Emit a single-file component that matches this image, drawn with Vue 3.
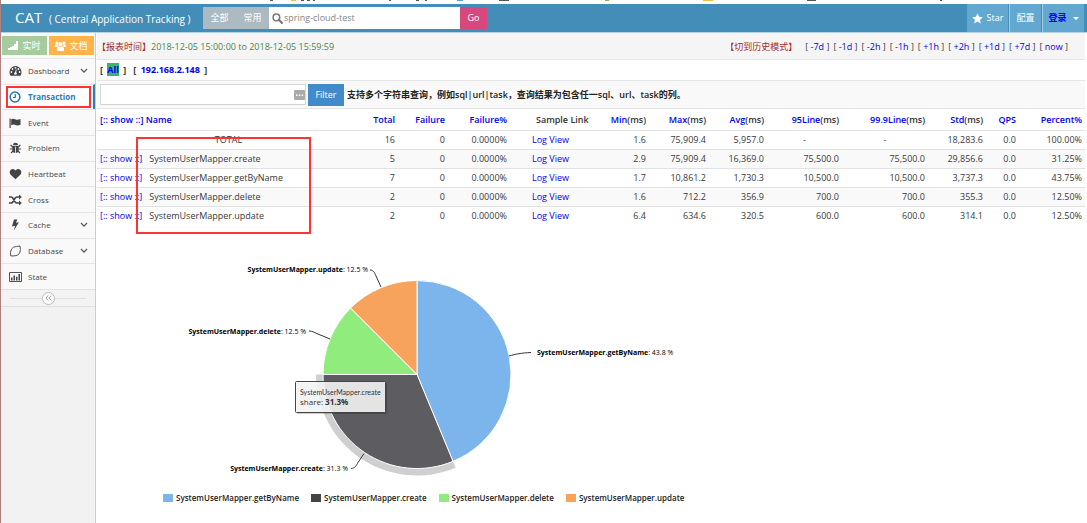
<script setup>
import { ref } from 'vue'

const domain = ref('spring-cloud-test')
const filter = ref('')

const menu = [
  { name: 'Dashboard', icon: 'dashboard', sub: true },
  { name: 'Transaction', icon: 'clock', active: true },
  { name: 'Event', icon: 'flag' },
  { name: 'Problem', icon: 'bug' },
  { name: 'Heartbeat', icon: 'heart' },
  { name: 'Cross', icon: 'random' },
  { name: 'Cache', icon: 'bolt', sub: true },
  { name: 'Database', icon: 'leaf', sub: true },
  { name: 'State', icon: 'chart' }
]

const steps = ['-7d', '-1d', '-2h', '-1h', '+1h', '+2h', '+1d', '+7d', 'now']

const timing = ['Min', 'Max', 'Avg', '95Line', '99.9Line', 'Std']

const rows = [
  { name: 'TOTAL', total: 16, values: ['1.6', '75,909.4', '5,957.0', '-', '-', '18,283.6'], percent: '100.00%' },
  { name: 'SystemUserMapper.create', total: 5, values: ['2.9', '75,909.4', '16,369.0', '75,500.0', '75,500.0', '29,856.6'], percent: '31.25%' },
  { name: 'SystemUserMapper.getByName', total: 7, values: ['1.7', '10,861.2', '1,730.3', '10,500.0', '10,500.0', '3,737.3'], percent: '43.75%' },
  { name: 'SystemUserMapper.delete', total: 2, values: ['1.6', '712.2', '356.9', '700.0', '700.0', '355.3'], percent: '12.50%' },
  { name: 'SystemUserMapper.update', total: 2, values: ['6.4', '634.6', '320.5', '600.0', '600.0', '314.1'], percent: '12.50%' }
]

const legend = [
  { name: 'SystemUserMapper.getByName', color: 'blue' },
  { name: 'SystemUserMapper.create', color: 'dark' },
  { name: 'SystemUserMapper.delete', color: 'green' },
  { name: 'SystemUserMapper.update', color: 'orange' }
]
</script>

<template>
  <div class="page">
    <svg class="strip" width="1087" height="4" aria-hidden="true">
      <path d="M270 0h3v1h-3zM301 0h3v1h-3zM307 0h3v1h-3zM313 0h2v1h-2zM389 0h2v1h-2zM416 0h3v1h-3zM425 0h2v1h-2zM499 0h10v1h-10zM807 0h9v1h-9zM940 0h2v1h-2z" fill="#555" />
      <path d="M291 0h5v1h-5zM703 0h10v1h-10z" fill="#f0c04a" />
      <path d="M457 0h6v1h-6z" fill="#5aa0e8" />
      <path d="M605 0h4v1h-4z" fill="#a0a860" />
    </svg>
    <header class="navbar">
      <a class="brand" href="#">CAT</a>
      <a class="tagline" href="#">( Central Application Tracking )</a>
      <form class="search" @submit.prevent>
        <button type="button" class="cat">全部</button>
        <button type="button" class="cat">常用</button>
        <label class="domain">
          <svg width="11" height="11" viewBox="0 0 11 11" aria-hidden="true"><circle cx="4.4" cy="4.4" r="3.3" fill="none" stroke="#777" stroke-width="1.5" /><path d="M6.8 6.8 10 10" stroke="#777" stroke-width="2" stroke-linecap="round" /></svg>
          <input v-model="domain" type="text" aria-label="Domain" />
        </label>
        <button type="submit" class="go">Go</button>
      </form>
      <nav class="actions">
        <a href="#" class="white"><svg width="11" height="11" viewBox="0 0 12 12" aria-hidden="true"><path d="M6 .3 7.7 4l4.1.5-3 2.8.8 4.1L6 9.4 2.4 11.4l.8-4.1-3-2.8L4.300 4z" fill="#fff" /></svg>Star</a>
        <a href="#" class="white">配置</a>
        <a href="#" class="login">登录<i class="caret"></i></a>
      </nav>
    </header>

    <div class="body">
      <aside class="sidebar">
        <div class="shortcuts">
          <button type="button" class="live"><svg width="11" height="9" viewBox="0 0 11 9" aria-hidden="true"><path d="M0 7h2v2H0zM2 6h2v3H2zM4 5h2v4H4zM6 3h2v6H6zM8 0h2v9H8z" fill="#fff" /></svg>实时</button>
          <button type="button" class="docs"><svg width="11" height="10" viewBox="0 0 11 10" aria-hidden="true"><g fill="#fff"><circle cx="2" cy="2" r="1.500" /><circle cx="9" cy="2" r="1.500" /><circle cx="5.500" cy="3.400" r="2.100" /><path d="M0 6V4.500q0-1 1-1h1.500q.3 1.600 1 2H2.300L2 6zM11 6V4.500q0-1-1-1H8.500q-.3 1.600-1 2h1.200L9 6zM2 10V7.500q0-2 1.800-2 1.700 1.200 3.400 0 1.800 0 1.800 2V10z" /></g></svg>文档</button>
        </div>
        <ul class="menu">
          <li v-for="m in menu" :key="m.name" :class="{ active: m.active }">
            <a href="#">
              <svg class="icon" width="13" height="12" viewBox="0 0 13 12" aria-hidden="true">
                <g v-if="m.icon === 'dashboard'"><path d="M6.500 1A6 6 0 0 0 .5 7q0 2 1 3.800h10q1-1.800 1-3.800a6 6 0 0 0-6-6z" fill="#444" /><g fill="#f9f9f9"><circle cx="2.400" cy="7" r=".9" /><circle cx="3.600" cy="4" r=".9" /><circle cx="6.500" cy="2.800" r=".9" /><circle cx="9.400" cy="4" r=".9" /><circle cx="10.600" cy="7" r=".9" /></g><path d="m7.300 4.500-.8 3.500" stroke="#f9f9f9" stroke-width="1" /><circle cx="6.500" cy="8.500" r="1.300" fill="#f9f9f9" /></g>
                <g v-else-if="m.icon === 'clock'" fill="none" stroke="#1f77b8"><circle cx="6" cy="6" r="4.900" stroke-width="1.500" /><path d="M6.300 3v3.500H4" stroke-width="1.200" /></g>
                <g v-else-if="m.icon === 'flag'" fill="#444"><path d="M.5 1.500h1.200V11H.5zM2.200 2.300q2-1.200 4 0t5.300-.3v5.700q-2.800 1.300-5 .3t-4.300.2z" /></g>
                <g v-else-if="m.icon === 'bug'"><path d="M4 3a2.500 2.200 0 0 1 5 0zM3.300 3.700h6.400v4a3.200 3.200 0 0 1-6.400 0z" fill="#444" /><path d="M3.500 5 1.600 3M9.500 5l1.900-2M3.500 7H.8M9.500 7h2.700M4 9l-2 2M9 9l2 2" stroke="#444" stroke-width="1.100" fill="none" /><path d="M6.500 4.600V11" stroke="#f9f9f9" stroke-width=".8" /></g>
                <path v-else-if="m.icon === 'heart'" d="M6.500 11.300 1.400 6.400Q.2 4.700.9 2.900 2 .8 4 1q1.500.1 2.500 1.600Q7.500 1.100 9 1q2-.2 3.100 1.900.7 1.800-.5 3.500z" fill="#444" />
                <g v-else-if="m.icon === 'random'" fill="none" stroke="#444" stroke-width="1.600"><path d="M0 3h2.300q1 0 1.800 1.500L6 7.700Q6.900 9 8 9h2.500M0 9h2.300q1 0 1.800-1.500L6 4.300Q6.900 3 8 3h2.500" /><path d="M10 .6 12.800 3 10 5.400zM10 6.600 12.800 9 10 11.400z" fill="#444" stroke="none" /></g>
                <path v-else-if="m.icon === 'bolt'" d="M5 .5h3.400L6.900 3.700l3-.5L4.800 11.800l1.300-5-3.200.6z" fill="#444" />
                <path v-else-if="m.icon === 'leaf'" d="M11 1q1 4-.3 7-1.400 2.700-4.700 2.800L1.800 11Q.7 7 2.500 4 4 1.600 7.500 1.500z" fill="none" stroke="#555" stroke-width="1" />
                <g v-else><path d="M.5 1.500h12v9H.5z" fill="none" stroke="#555" /><path d="M2 6.500h1.500v3H2zM4.500 4.500H6v5H4.500zM7 5.800h1.500v3.700H7zM9.500 3H11v6.500H9.500z" fill="#444" /></g>
              </svg>
              <span>{{ m.name }}</span>
              <svg v-if="m.sub" class="arrow" width="8" height="6" viewBox="0 0 8 6" aria-hidden="true"><path d="m1 1 3 3.200L7 1" fill="none" stroke="#555" stroke-width="1.200" /></svg>
            </a>
          </li>
        </ul>
        <div class="collapse">
          <button type="button" aria-label="Collapse menu"><svg width="7" height="6" viewBox="0 0 7 6" aria-hidden="true"><path d="M3.200.5.9 3l2.300 2.500M6.200.5 3.900 3l2.300 2.500" fill="none" stroke="#999" /></svg></button>
        </div>
      </aside>

      <main class="content">
        <div class="crumbs">
          <div><span class="red">【报表时间】</span><span class="range">2018-12-05 15:00:00 to 2018-12-05 15:59:59</span></div>
          <div class="history"><span class="red">【切到历史模式】</span><span v-for="s in steps" :key="s">[ <a href="#">{{ s }}</a> ]</span></div>
        </div>
        <div class="machines"><span>[ <a href="#" class="current">All</a> ]</span><span>[ <a href="#">192.168.2.148</a> ]</span></div>
        <form class="filter" @submit.prevent>
          <div class="field">
            <input v-model="filter" type="text" aria-label="Name filter" />
            <svg width="11" height="10" viewBox="0 0 11 10" aria-hidden="true"><rect width="11" height="10" rx="1" fill="#aaa" /><path d="M2 4.500h1.500v1.500H2zM4.800 4.500h1.500v1.500H4.800zM7.600 4.500h1.500v1.500H7.600z" fill="#fff" /></svg>
          </div>
          <button type="submit">Filter</button>
          <b>支持多个字符串查询，例如sql|url|task，查询结果为包含任一sql、url、task的列。</b>
        </form>

        <div class="report">
          <table>
            <colgroup>
              <col class="c-name" /><col class="c-total" /><col class="c-fail" /><col class="c-rate" /><col class="c-link" />
              <col class="c-min" /><col class="c-max" /><col class="c-avg" /><col class="c-95" /><col class="c-99" /><col class="c-std" />
              <col class="c-qps" /><col class="c-percent" />
            </colgroup>
            <thead>
              <tr>
                <th class="left"><a href="#">[:: show ::]</a> <a href="#">Name</a></th>
                <th><a href="#">Total</a></th>
                <th><a href="#">Failure</a></th>
                <th><a href="#">Failure%</a></th>
                <th class="sample">Sample Link</th>
                <th v-for="t in timing" :key="t"><a href="#">{{ t }}</a>(ms)</th>
                <th><a href="#">QPS</a></th>
                <th><a href="#">Percent%</a></th>
              </tr>
            </thead>
            <tbody>
              <tr v-for="(r, i) in rows" :key="r.name">
                <td v-if="i === 0" class="center">{{ r.name }}</td>
                <td v-else class="left"><a href="#">[:: show ::]</a><span class="name">{{ r.name }}</span></td>
                <td>{{ r.total }}</td>
                <td>0</td>
                <td>0.0000%</td>
                <td class="log"><a href="#">Log View</a></td>
                <td v-for="(v, j) in r.values" :key="j" :class="{ center: v === '-' }">{{ v }}</td>
                <td>0.0</td>
                <td>{{ r.percent }}</td>
              </tr>
            </tbody>
          </table>
          <div class="mark"></div>
        </div>

        <svg class="chart" width="620" height="256" viewBox="96 230 620 256" role="img" aria-label="Share of calls by name">
          <path d="M315 374.500A101 101 0 0 0 454.650 467.810L452 461.350A94 94 0 0 1 322 374.500z" fill="#cfcfcf" />
          <g stroke="#fff" stroke-width="1">
            <path d="M416 374.500V280.500A94 94 0 0 1 452 461.350z" fill="#7cb5ec" />
            <path d="M416 374.500 452 461.350A94 94 0 0 1 322 374.500z" fill="#5c5c61" />
            <path d="M416 374.500H322A94 94 0 0 1 349.530 308.030z" fill="#90ed7d" />
            <path d="M416 374.500 349.530 308.030A94 94 0 0 1 416 280.500z" fill="#f7a35c" />
          </g>
          <g fill="none" stroke="#333" stroke-width="1">
            <path d="M369 270c4 0 5 4 6 6l5 11" />
            <path d="M308 331c4 0 6 2 9 3l12 5" />
            <path d="M508 356c7-2 12-3 22-3.500" />
            <path d="M350 468.500c4 0 6-4 7-6l6-9" />
          </g>
          <g class="labels">
            <text x="367" y="272" text-anchor="end"><tspan class="bold">SystemUserMapper.update</tspan>: 12.5 %</text>
            <text x="305" y="334" text-anchor="end"><tspan class="bold">SystemUserMapper.delete</tspan>: 12.5 %</text>
            <text x="536" y="355"><tspan class="bold">SystemUserMapper.getByName</tspan>: 43.8 %</text>
            <text x="347" y="471" text-anchor="end"><tspan class="bold">SystemUserMapper.create</tspan>: 31.3 %</text>
          </g>
          <g>
            <rect x="296" y="383" width="90" height="31" rx="1" fill="#000" opacity=".2" />
            <rect x="294.500" y="381.500" width="90" height="31" rx="1" fill="#f9f9f9" fill-opacity=".88" stroke="#434348" />
            <text class="tip-head" x="299" y="395">SystemUserMapper.create</text>
            <text class="tip-body" x="299" y="405">share: <tspan class="bold">31.3%</tspan></text>
          </g>
        </svg>
        <ul class="legend">
          <li v-for="l in legend" :key="l.name"><i :class="l.color"></i>{{ l.name }}</li>
        </ul>
      </main>
    </div>
  </div>
</template>

<style>
body { background: #fff; }
</style>

<style scoped>
.page { font: 9px/12px "Open Sans", "Noto Sans CJK SC", sans-serif; color: #393939; border-left: 1px solid #b08080; min-height: 100vh; box-sizing: border-box; display: flex; flex-direction: column; overflow: hidden; }
a { color: #00e; text-decoration: none; }
ul { list-style: none; margin: 0; padding: 0; }
button, input { font: inherit; border: 0; padding: 0; margin: 0; box-sizing: border-box; }
.strip { display: block; margin-left: -1px; }

.navbar { display: flex; align-items: stretch; height: 28px; background: #438eb9; border-bottom: 1px solid #b5d3e5; padding-right: 3px; }
.brand, .tagline { color: #fff; align-self: center; white-space: nowrap; }
.brand { font-size: 15px; margin-left: 14px; width: 34px; padding-bottom: 2px; }
.tagline { font-size: 10px; width: 154px; padding-top: 2px; }
.search { display: flex; height: 22px; align-self: center; }
.cat { width: 33px; background: #abbac3; color: #fff; }
.domain { display: flex; align-items: center; width: 191px; background: #fff; box-sizing: border-box; padding-left: 3px; gap: 1px; }
.domain input { flex: 1; min-width: 0; color: #858585; background: none; outline: 0; }
.go { width: 27px; background: #d6487e; color: #fff; }
.actions { margin-left: auto; display: flex; gap: 1px; }
.actions a { display: flex; align-items: center; justify-content: center; background: #62a8d1; border-left: 1px solid #a5cde5; box-sizing: border-box; }
.actions a:first-child { width: 41px; gap: 4px; border-left: 0; }
.actions a:nth-child(2) { width: 32px; }
.actions .white { color: #fff; }
.login { width: 42px; gap: 6px; font-weight: 700; }
.caret { border: 3px solid transparent; border-top-color: #fff; border-bottom: 0; }

.body { display: flex; flex: 1; }
.sidebar { width: 94px; flex: none; background: #f2f2f2; border-right: 1px solid #ccc; }
.shortcuts { display: flex; gap: 2px; padding: 3px 1px; height: 19px; background: #fafafa; }
.shortcuts button { flex: 1; display: flex; align-items: center; justify-content: center; gap: 3px; color: #fff; }
.live { background: #a5cb9f; }
.docs { background: #ffb44b; }
.menu { display: grid; grid-auto-rows: 1fr; min-height: 231px; font-size: 8px; }
.menu li { border-top: 1px solid #e5e5e5; background: #f9f9f9; display: flex; }
.menu a { flex: 1; display: flex; align-items: center; color: #484848; padding: 0 7px 0 8px; gap: 6px; }
.menu .active { background: #fff; border-right: 2px solid #2b7dbc; }
.menu .active a { color: #2b7dbc; font-weight: 700; border: 2px solid #f33; margin: 1px 2px 1px 5px; padding: 0 0 0 1px; }
.arrow { margin-left: auto; }
.collapse { border: 1px solid #e0e0e0; border-width: 1px 0; height: 16px; display: flex; align-items: center; gap: 0; padding: 0 9px; background: #f3f3f3; }
.collapse::before, .collapse::after { content: ""; flex: 1; height: 1px; background: #e0e0e0; }
.collapse button { width: 13px; height: 13px; border: 1px solid #bbb; border-radius: 50%; background: #fff; display: flex; align-items: center; justify-content: center; }

.content { flex: 1; min-width: 0; margin-left: 1px; display: flex; flex-direction: column; }
.crumbs { display: flex; justify-content: space-between; align-items: center; height: 24px; background: #f5f5f5; border-bottom: 1px solid #e5e5e5; padding: 2px 17px 0 0; margin-right: 2px; white-space: nowrap; }
.history { display: flex; gap: 4px; }
.red { color: #a52a2a; }
.history .red { margin-right: 4px; }
.range { color: #468847; }
.machines { display: flex; gap: 7px; align-items: center; height: 20px; padding-left: 3px; font-weight: 700; white-space: pre; }
.machines a { margin: 0 2px; }
.machines .current { background: #3cb371; }
.filter { display: flex; align-items: center; height: 29px; box-sizing: border-box; background: #f9f9f9; border: 1px solid #e5e5e5; border-width: 1px 0; padding-left: 3px; margin-right: 2px; color: #222; white-space: nowrap; }
.field { width: 206px; height: 21px; display: flex; align-items: center; box-sizing: border-box; border: 1px solid #d5d5d5; background: #fff; }
.field input { flex: 1; min-width: 0; background: none; outline: 0; }
.filter button { width: 36px; height: 22px; background: #428bca; color: #fff; margin: 0 3px 0 2px; }
.filter b { font-weight: 600; }

.report { position: relative; margin-right: 2px; }
table { width: 100%; table-layout: fixed; border-collapse: collapse; }
th, td { height: 18px; padding: 0 3px; text-align: right; white-space: nowrap; border-bottom: 1px solid #e2e2e2; }
th { color: #333; font-weight: 600; height: 21px; }
tbody tr:nth-child(even) { background: #f9f9f9; }
tbody tr:last-child td { border-bottom: 0; }
th.left, td.left { text-align: left; }
td.center { text-align: center; }
.name { margin-left: 7px; }
th.sample { text-align: left; padding-left: 26px; }
td.log { text-align: left; padding-left: 22px; }
.c-total { width: 38px; } .c-fail { width: 50px; } .c-rate { width: 62px; } .c-link { width: 84px; }
.c-min { width: 55px; } .c-max { width: 60px; } .c-avg { width: 58px; } .c-95 { width: 75px; }
.c-99 { width: 86px; } .c-std { width: 58px; } .c-qps { width: 33px; } .c-percent { width: 66px; }
.mark { position: absolute; left: 39px; top: 28px; width: 171px; height: 93px; border: 2px solid #f33; }

.chart { display: block; margin-top: 5px; }
.labels { font-size: 7px; fill: #000; }
.bold { font-weight: 700; }
.tip-head { font-family: Lato, sans-serif; font-size: 7px; fill: #333; }
.tip-body { font-size: 8px; fill: #333; }
.legend { display: flex; gap: 12px; padding-left: 66px; margin-top: 6px; font-size: 8px; font-weight: 600; color: #222; }
.legend li { display: flex; align-items: center; gap: 3px; }
.legend i { width: 10px; height: 8px; }
.blue { background: #7cb5ec; }
.dark { background: #434348; }
.green { background: #90ed7d; }
.orange { background: #f7a35c; }
</style>
